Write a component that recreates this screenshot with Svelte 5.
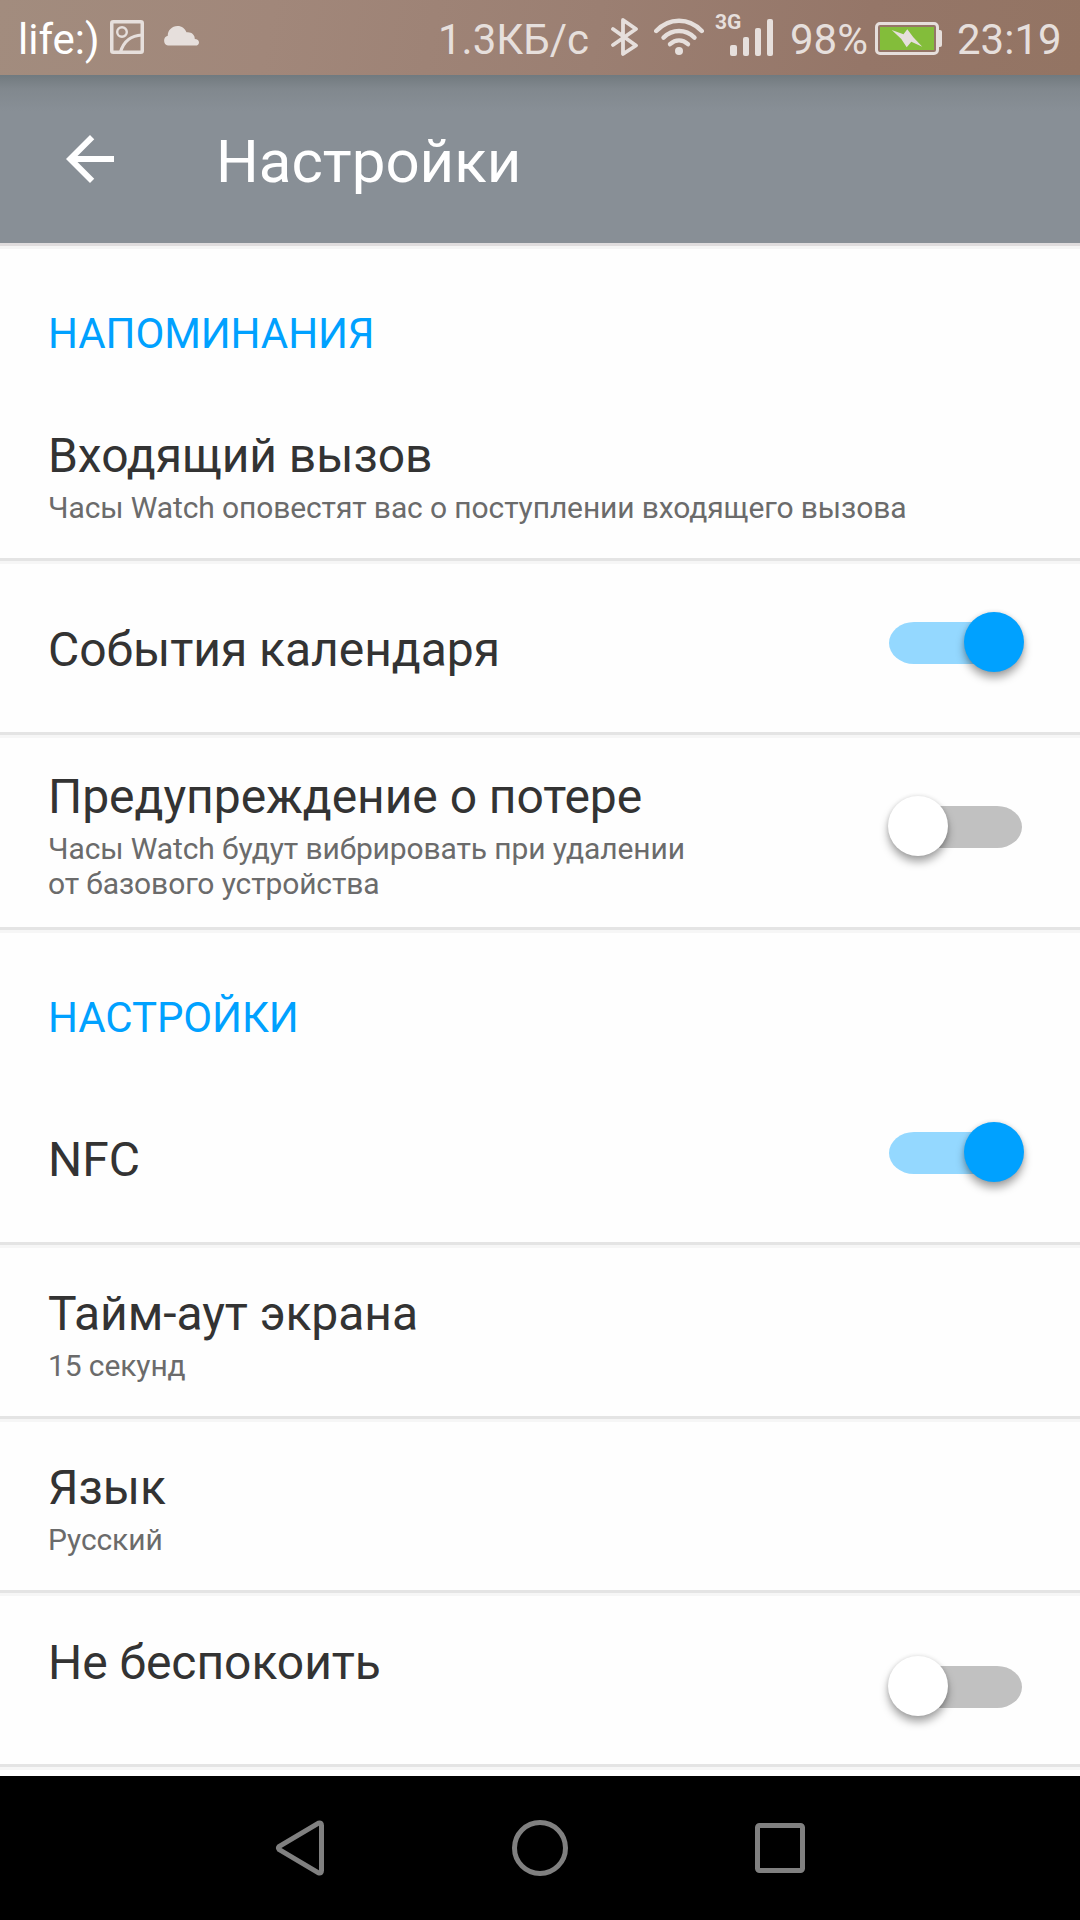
<script lang="ts">
  type Row = {
    title: string;
    lines?: string[];
    toggle?: boolean;
    on?: boolean;
    kind?: string;
  };

  type Section = { name: string; rows: Row[] };

  let sections: Section[] = $state([
    {
      name: 'НАПОМИНАНИЯ',
      rows: [
        { title: 'Входящий вызов', lines: ['Часы Watch оповестят вас о поступлении входящего вызова'] },
        { title: 'События календаря', toggle: true, on: true, kind: 'single' },
        {
          title: 'Предупреждение о потере',
          lines: ['Часы Watch будут вибрировать при удалении', 'от базового устройства'],
          toggle: true,
          on: false,
          kind: 'tall'
        }
      ]
    },
    {
      name: 'НАСТРОЙКИ',
      rows: [
        { title: 'NFC', toggle: true, on: true, kind: 'single' },
        { title: 'Тайм-аут экрана', lines: ['15 секунд'] },
        { title: 'Язык', lines: ['Русский'] },
        { title: 'Не беспокоить', toggle: true, on: false, kind: 'dnd' }
      ]
    }
  ]);
</script>

<div class="screen">
  <div class="status">
    <span class="carrier">life:)</span>
    <svg class="picture" width="34" height="34" viewBox="0 0 34 34" fill="none" stroke="currentColor">
      <rect x="1.75" y="1.75" width="30.5" height="30.5" rx="1.5" stroke-width="3.5" />
      <circle cx="12" cy="12" r="4.8" stroke-width="2.4" />
      <path d="M10.5 32C13.5 22 20 15.500 32 15" stroke-width="3.2" />
    </svg>
    <svg class="cloud" width="36" height="20" viewBox="0 0 36 20" fill="currentColor">
      <path d="M5 19.5a5 5 0 0 1-.2-9.7C4.5 4.5 9 0 14.5 0c4.5 0 7.5 2.5 9 6.3C28 5.5 32 8.5 31.8 13c2.5.2 4.2 1.5 4.2 3.4 0 1.9-1.5 3.1-3.4 3.1z" />
    </svg>

    <span class="speed">1.3КБ/с</span>
    <svg class="bluetooth" width="28" height="38" viewBox="0 0 28 38" fill="none" stroke="currentColor" stroke-width="3.8" stroke-linecap="round" stroke-linejoin="round">
      <path d="M2 11L25 27.5L12 36V2L25 11L2 27" />
    </svg>
    <svg class="wifi" width="50" height="38" viewBox="0 0 50 38" fill="none" stroke="currentColor" stroke-width="4.4" stroke-linecap="round">
      <path d="M2.2 13C15 -.7 35 -.7 47.8 13" />
      <path d="M9.5 19.6c9-8.8 22-8.8 31 0" />
      <path d="M16 26.2c5.500-5 12.500-5 18 0" />
      <circle cx="25" cy="33" r="4" fill="currentColor" stroke="none" />
    </svg>
    <span class="network">3G</span>
    <svg class="signal" width="43" height="37" viewBox="0 0 43 37" fill="currentColor">
      <rect x="0" y="26" width="7" height="11" rx="2" />
      <rect x="13" y="18" width="6" height="19" rx="2" />
      <rect x="25" y="9" width="6" height="28" rx="2" />
      <rect x="37" y="0" width="6" height="37" rx="2" />
    </svg>
    <span class="percent">98%</span>
    <svg class="battery" width="67" height="33" viewBox="0 0 67 33">
      <rect x="1.5" y="1.5" width="61" height="30" rx="3.5" fill="none" stroke="currentColor" stroke-width="3" />
      <rect x="5" y="5" width="54" height="23" fill="#83bd3a" />
      <path d="M64 8h1a2 2 0 0 1 2 2v13a2 2 0 0 1-2 2h-1z" fill="currentColor" />
      <path d="M16.7 8L28.5 12.3L32.3 7.3L38.3 15.3L47.3 24.7L36.3 19.7L31.7 25.3L26.3 17z" fill="currentColor" />
    </svg>
    <span class="clock">23:19</span>
  </div>

  <header>
    <svg class="back" width="48" height="48" viewBox="4 4 16 16" fill="#fff">
      <path d="M20 11H7.83l5.59-5.59L12 4l-8 8 8 8 1.41-1.41L7.83 13H20v-2z" />
    </svg>
    <h1>Настройки</h1>
  </header>
  <div class="header-shadow"></div>

  <main>
    {#each sections as section}
      <h2>{section.name}</h2>
      {#each section.rows as row}
        <div class="row {row.kind ?? ''}">
          <div class="text">
            <div class="title">{row.title}</div>
            {#if row.lines}
              <div class="summary">
                {#each row.lines as line}
                  <div>{line}</div>
                {/each}
              </div>
            {/if}
          </div>
          {#if row.toggle}
            <button class="switch" class:on={row.on} aria-label={row.title} onclick={() => (row.on = !row.on)}>
              <span class="track"></span>
              <span class="thumb"></span>
            </button>
          {/if}
        </div>
      {/each}
    {/each}
  </main>

  <nav>
    <svg width="60" height="60" viewBox="0 0 60 60">
      <path d="M9.3 28.3Q7.7 30 9.3 31.7L48.5 54.8Q51.500 55.800 51.5 52.500V7.500Q51.500 4.200 48.5 5.200Z" />
    </svg>
    <svg width="60" height="60" viewBox="0 0 60 60">
      <circle cx="30" cy="30" r="25.5" />
    </svg>
    <svg width="60" height="60" viewBox="0 0 60 60">
      <rect x="7.5" y="7.5" width="45" height="45" rx="2" />
    </svg>
  </nav>
</div>

<style>
  :global(body) {
    margin: 0;
    background: #fefefe;
  }

  .screen {
    display: flex;
    flex-direction: column;
    width: 1080px;
    height: 1920px;
    overflow: hidden;
    background: #fefefe;
    font-family: Roboto, sans-serif;
  }

  svg {
    display: block;
    flex: none;
  }

  /* Status bar */
  .status {
    display: flex;
    flex: none;
    align-items: flex-start;
    box-sizing: border-box;
    height: 75px;
    padding-left: 18px;
    background: linear-gradient(100deg, #a28c7e 0%, #a1877a 25%, #9b7f72 55%, #957668 80%, #937463 100%);
    color: #e6dfdc;
    font-size: 42px;
    line-height: 50px;
    white-space: nowrap;
  }

  .carrier,
  .speed,
  .percent,
  .clock {
    flex: none;
    margin-top: 15px;
  }

  .carrier {
    width: 92px;
    color: #fff;
  }

  .picture {
    margin-top: 20px;
  }

  .cloud {
    margin: 26px 0 0 19px;
  }

  .speed {
    width: 172px;
    margin-left: 239px;
  }

  .bluetooth {
    margin: 18px 0 0 1px;
  }

  .wifi {
    margin: 18px 0 0 15px;
  }

  .network {
    width: 15px;
    margin: 10px 0 0 11px;
    font-size: 21px;
    font-weight: 700;
    line-height: 24px;
  }

  .signal {
    margin-top: 19px;
  }

  .percent {
    width: 85px;
    margin-left: 17px;
  }

  .battery {
    margin-top: 22px;
  }

  .clock {
    margin-left: 15px;
  }

  /* App bar */
  header {
    display: flex;
    flex: none;
    align-items: center;
    gap: 102px;
    height: 168px;
    padding-left: 66px;
    background: linear-gradient(#6f7a80 0, #757d82 3px, #81888e 14px, #888f96 36px);
  }

  h1 {
    margin: 6px 0 0;
    color: #fff;
    font-size: 60px;
    font-weight: 400;
    line-height: 70px;
  }

  .header-shadow {
    flex: none;
    height: 6px;
    background: linear-gradient(#dfdcdd 0 3px, #f5f5f5 3px 6px);
  }

  /* Settings list */
  main {
    flex: 1;
    min-height: 0;
  }

  h2 {
    box-sizing: border-box;
    height: 141px;
    margin: 0;
    padding: 60px 0 0 48px;
    color: #00a1ff;
    font-size: 42px;
    font-weight: 400;
    letter-spacing: -0.1px;
    line-height: 50px;
  }

  .row {
    display: flex;
    justify-content: space-between;
    box-sizing: border-box;
    height: 174px;
    padding: 38px 56px 0 48px;
    background: linear-gradient(#e4e4e4 0 3px, #f6f6f6 3px 6px) bottom / 100% 6px no-repeat;
  }

  .row.single {
    padding-top: 58px;
  }

  .row.tall {
    height: 195px;
    padding-top: 31px;
  }

  .row.dnd {
    padding-top: 39px;
  }

  .title {
    color: #333;
    font-size: 48px;
    letter-spacing: -0.05px;
    line-height: 56px;
  }

  .summary {
    margin-top: 6px;
    color: #6b6b6b;
    font-size: 30px;
    letter-spacing: -0.115px;
    line-height: 35px;
    white-space: nowrap;
  }

  .switch {
    display: grid;
    flex: none;
    width: 136px;
    height: 60px;
    padding: 0;
    border: 0;
    background: none;
  }

  .single .switch {
    margin-top: -10px;
  }

  .tall .switch {
    margin-top: 27px;
  }

  .dnd .switch {
    margin-top: 21px;
  }

  .track,
  .thumb {
    grid-area: 1 / 1;
  }

  .track {
    height: 42px;
    margin: 10px 2px 0 1px;
    border-radius: 25px / 21px;
    background: #c1c1c1;
  }

  .thumb {
    width: 60px;
    height: 60px;
    border-radius: 50%;
    background: #fff;
    box-shadow: 0 6px 9px rgba(0, 0, 0, 0.34), 0 0 4px rgba(0, 0, 0, 0.12);
  }

  .on .track {
    background: #94d8ff;
  }

  .on .thumb {
    justify-self: end;
    background: #00a1ff;
  }

  /* Navigation bar */
  nav {
    display: flex;
    flex: none;
    align-items: center;
    justify-content: center;
    gap: 180px;
    height: 144px;
    background: #000;
  }

  nav svg {
    fill: none;
    stroke: #808080;
    stroke-width: 5;
    stroke-linejoin: round;
  }
</style>
